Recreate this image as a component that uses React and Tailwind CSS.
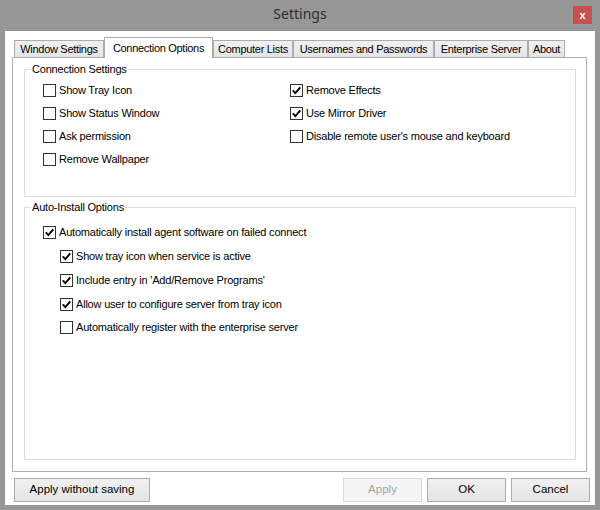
import React from "react";

const tabs = [
  { label: "Window Settings", width: "w-[90px]" },
  { label: "Connection Options", width: "w-[109px]", active: true },
  { label: "Computer Lists", width: "w-[80px]" },
  { label: "Usernames and Passwords", width: "w-[141px]" },
  { label: "Enterprise Server", width: "w-[94px]" },
  { label: "About", width: "w-[37px]" },
];

function CheckBox({ label, checked, className = "h-[23px]" }) {
  return (
    <div className={"flex items-center " + className}>
      <span className="flex h-[13px] w-[13px] shrink-0 items-center justify-center border border-[#333333] bg-white">
        {checked && (
          <svg width="11" height="11" viewBox="0 0 11 11">
            <path d="M1.8 5.4 L4.3 8.1 L9.3 2.3" fill="none" stroke="#000" strokeWidth="1.9" />
          </svg>
        )}
      </span>
      <span className="ml-[3px] whitespace-nowrap text-[11px] leading-[13px] tracking-[-0.2px] text-black">{label}</span>
    </div>
  );
}

function Button({ children, disabled, className = "" }) {
  return (
    <button
      disabled={disabled}
      className={
        "h-[24px] border text-[11.5px] " +
        (disabled
          ? "border-[#d9d9d9] bg-[#f4f4f4] text-[#a3a3a3] "
          : "border-[#acacac] bg-gradient-to-b from-[#f0f0f0] to-[#e5e5e5] text-black ") +
        className
      }
    >
      {children}
    </button>
  );
}

export default function App() {
  return (
    <div className="flex h-[510px] w-[600px] flex-col bg-[#979797] font-['Liberation_Sans',Arial,sans-serif]">
      {/* title bar */}
      <div className="flex h-[31px] shrink-0 items-start">
        <div className="w-[27px]" />
        <div className="flex-1 pt-[4px] text-center font-['Noto_Sans',sans-serif] text-[14px] leading-[20px] text-[#2e2e2e]">
          Settings
        </div>
        <div className="mr-[8px] mt-[6px] flex h-[18px] w-[19px] items-center justify-center bg-[#c75050] text-[11px] font-bold leading-none text-white">
          x
        </div>
      </div>

      {/* client area */}
      <div className="mx-[5px] h-[474px] bg-white pl-[7px] pr-[8px] pt-[6px]">
        {/* tab strip */}
        <div className="flex h-[20px] items-end pl-[2px]">
          {tabs.map((t) =>
            t.active ? (
              <div
                key={t.label}
                className={
                  "relative z-10 -mb-px flex h-[21px] items-start justify-center whitespace-nowrap border border-b-0 border-[#acacac] bg-white pt-[2px] text-[11px] tracking-[-0.3px] text-black " +
                  t.width
                }
              >
                {t.label}
              </div>
            ) : (
              <div
                key={t.label}
                className={
                  "flex h-[17px] items-center justify-center whitespace-nowrap border border-b-0 border-[#acacac] bg-gradient-to-b from-[#f0f0f0] to-[#e5e5e5] text-[11px] tracking-[-0.3px] text-black " +
                  t.width
                }
              >
                {t.label}
              </div>
            )
          )}
        </div>

        {/* tab page */}
        <div className="h-[415px] border border-[#acacac] bg-white pl-[11px] pt-[5px]">
          <fieldset className="h-[134px] w-[552px] border border-[#dcdcdc]">
            <legend className="ml-[6px] px-[1px] text-[11px] leading-[13px] tracking-[-0.2px] text-black">Connection Settings</legend>
            <div className="grid grid-cols-[247px_1fr] pl-[18px] pt-[3px]">
              <div>
                <CheckBox label="Show Tray Icon" />
                <CheckBox label="Show Status Window" />
                <CheckBox label="Ask permission" />
                <CheckBox label="Remove Wallpaper" />
              </div>
              <div>
                <CheckBox label="Remove Effects" checked />
                <CheckBox label="Use Mirror Driver" checked />
                <CheckBox label="Disable remote user's mouse and keyboard" />
              </div>
            </div>
          </fieldset>

          <fieldset className="mt-[4px] h-[259px] w-[552px] border border-[#dcdcdc]">
            <legend className="ml-[6px] px-[1px] text-[11px] leading-[13px] tracking-[-0.2px] text-black">Auto-Install Options</legend>
            <div className="pl-[18px] pt-[7px]">
              <CheckBox label="Automatically install agent software on failed connect" checked className="h-[23.75px]" />
              <div className="pl-[17px]">
                <CheckBox label="Show tray icon when service is active" checked className="h-[23.75px]" />
                <CheckBox label="Include entry in 'Add/Remove Programs'" checked className="h-[23.75px]" />
                <CheckBox label="Allow user to configure server from tray icon" checked className="h-[23.75px]" />
                <CheckBox label="Automatically register with the enterprise server" className="h-[23.75px]" />
              </div>
            </div>
          </fieldset>
        </div>

        {/* buttons */}
        <div className="mt-[6px] flex items-start justify-between pl-[2px]">
          <Button className="w-[136px]">Apply without saving</Button>
          <div className="-mr-[3px] flex gap-[5px]">
            <Button disabled className="w-[79px]">Apply</Button>
            <Button className="w-[79px]">OK</Button>
            <Button className="w-[79px]">Cancel</Button>
          </div>
        </div>
      </div>
    </div>
  );
}
